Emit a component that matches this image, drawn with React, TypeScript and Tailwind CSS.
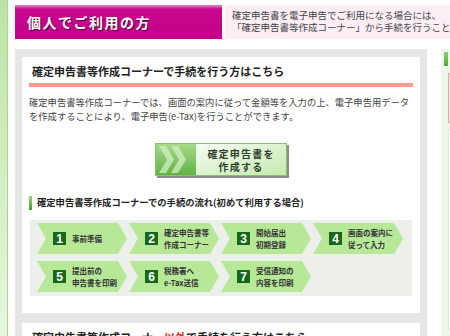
const steps = [
  [
    { n: 1, lines: ["事前準備"] },
    { n: 2, lines: ["確定申告書等", "作成コーナー"] },
    { n: 3, lines: ["開始届出", "初期登録"] },
    { n: 4, lines: ["画面の案内に", "従って入力"] },
  ],
  [
    { n: 5, lines: ["提出前の", "申告書を印刷"] },
    { n: 6, lines: ["税務署へ", "e-Tax送信"] },
    { n: 7, lines: ["受信通知の", "内容を印刷"] },
  ],
];

const Step = ({ n, lines }: { n: number; lines: string[] }) => (
  <div className="flex h-[31px] w-[90px] shrink-0 items-center bg-[#b6e897] pl-[16px] [clip-path:polygon(0_0,81px_0,90px_50%,81px_100%,0_100%,9px_50%)]">
    <div className="flex h-[13px] w-[13px] shrink-0 items-center justify-center bg-[#17691a] font-['Liberation_Sans',sans-serif] text-[12px] leading-none font-bold text-white">
      {n}
    </div>
    <div className="ml-[6px] text-[7.5px] leading-[12px] font-bold whitespace-nowrap text-[#333]">
      {lines.map((l) => (
        <div key={l}>{l}</div>
      ))}
    </div>
  </div>
);

export default function App() {
  return (
    <div className="flex h-[336px] w-[450px] overflow-hidden bg-white font-['Noto_Sans_CJK_JP','Noto_Sans',sans-serif] text-[#333]">
      {/* left sidebar edge */}
      <div className="w-[8px] shrink-0 border-r border-[#a8d68e] bg-gradient-to-b from-[#bce4a4] to-[#e6f7de]" />

      <div className="ml-[7px] min-w-0 flex-1 pt-[5px]">
        {/* header row */}
        <div className="flex h-[34px]">
          <div className="flex w-[207px] shrink-0 items-center bg-[linear-gradient(#e88bc9,#c8088e_4px,#c4008a)] pl-[12px] text-[14px] font-bold tracking-[1.5px] text-white [text-shadow:1px_1px_1px_#4a0035]">
            個人でご利用の方
          </div>
          <div className="ml-[3px] flex-1 bg-[#fdeef6] pt-[5px] pl-[7px] text-[9.5px] leading-[11.5px] whitespace-nowrap text-[#444]">
            <div>確定申告書を電子申告でご利用になる場合には、</div>
            <div>「確定申告書等作成コーナー」から手続を行うことができます。</div>
          </div>
        </div>

        <div className="mt-[10px] flex">
          {/* main panel */}
          <div className="flex w-[412px] shrink-0 flex-col gap-[10px] bg-[#e6e6e6] px-[7px] pt-[8px]">
            <div className="bg-white px-[7px] pt-[7px] pb-[17px]">
              <h2 className="pl-[3px] text-[11px] leading-[14px] font-bold whitespace-nowrap text-[#222]">
                確定申告書等作成コーナーで手続を行う方はこちら
              </h2>
              <div className="mt-[5px] h-[4px] bg-[#ff9b8d]" />
              <p className="mt-[8px] text-[9.3px] leading-[14px] whitespace-nowrap text-[#444]">
                確定申告書等作成コーナーでは、画面の案内に従って金額等を入力の上、電子申告用データ
                <br />
                を作成することにより、電子申告(e-Tax)を行うことができます。
              </p>

              {/* button */}
              <div className="mt-[20px] flex justify-center">
                <a className="flex h-[33px] w-[132px] border border-[#86c46a] shadow-[2px_2px_0_#8c8c8c]">
                  <div className="flex w-[40px] items-center bg-gradient-to-b from-[#a6da88] to-[#5fb343]">
                    <svg width="40" height="31" viewBox="0 0 40 31">
                      <polygon points="3,2 10,2 18,15.5 10,29 3,29 11,15.5" fill="#d2efc2" opacity="0.75" />
                      <polygon points="15,2 22,2 30,15.5 22,29 15,29 23,15.5" fill="#d2efc2" opacity="0.75" />
                    </svg>
                  </div>
                  <div className="flex flex-1 flex-col items-center justify-center bg-gradient-to-br from-[#f6fcf2] to-[#c4e9ad] text-[10px] leading-[13px] font-bold tracking-[1.2px] text-[#2f3f2f]">
                    <span>確定申告書を</span>
                    <span>作成する</span>
                  </div>
                </a>
              </div>

              {/* flow heading */}
              <div className="mt-[20px] flex h-[14px] items-center">
                <div className="h-[14px] w-[3px] bg-gradient-to-b from-[#9ad878] to-[#3e9b2a]" />
                <span className="ml-[5px] text-[9.3px] font-bold whitespace-nowrap text-[#222]">
                  確定申告書等作成コーナーでの手続の流れ(初めて利用する場合)
                </span>
              </div>

              {/* steps */}
              <div className="mx-[1px] mt-[10px] flex flex-col gap-[7px] bg-[#edefeb] pt-[3px] pb-[4px] pl-[7px]">
                {steps.map((row, i) => (
                  <div key={i} className="flex gap-[2px]">
                    {row.map((s) => (
                      <Step key={s.n} n={s.n} lines={s.lines} />
                    ))}
                  </div>
                ))}
              </div>
            </div>

            <div className="h-[40px] bg-white pt-[7px] pl-[10px]">
              <h2 className="text-[11px] leading-[14px] font-bold whitespace-nowrap text-[#222]">
                確定申告書等作成コーナー<span className="text-[#e0281e]">以外</span>で手続を行う方はこちら
              </h2>
            </div>
          </div>

          {/* right column (cut off) */}
          <div className="ml-[14px] flex h-[290px] w-[30px] shrink-0 flex-col bg-[#eef6ea] pt-[3px]">
            <div className="ml-[3px] h-[14px] w-[4px] bg-gradient-to-b from-[#8fd06c] to-[#4aa835]" />
            <div className="mt-[7px] ml-[7px] h-[50px] border border-[#f0a4a4] bg-[#fde9e9]" />
            <div className="mt-[6px] ml-[7px] h-[200px] border border-[#dcebd5] bg-white" />
          </div>
        </div>
      </div>
    </div>
  );
}
